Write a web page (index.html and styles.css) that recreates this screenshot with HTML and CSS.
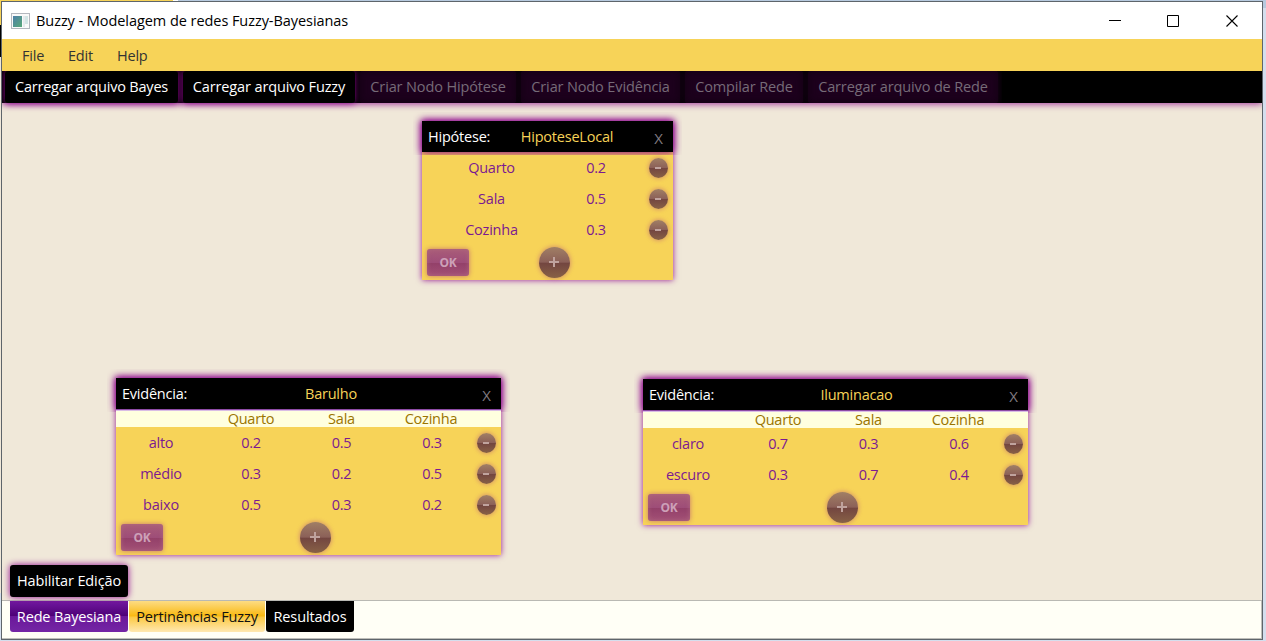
FILE: index.html
```html
<!DOCTYPE html>
<html lang="pt">
<head>
<meta charset="utf-8">
<title>Buzzy</title>
<link rel="stylesheet" href="styles.css">
</head>
<body>
<div class="behind"><i class="behind-top"></i><i class="behind-white"></i><i class="behind-gold"></i><i class="behind-dark"></i><i class="behind-sand"></i></div>
<div class="window">
  <header class="titlebar">
    <svg class="app-icon" width="19" height="16" viewBox="0 0 19 16"><defs><linearGradient id="g" x2="1" y2="1"><stop offset="0" stop-color="#4d80a8"/><stop offset="1" stop-color="#57a878"/></linearGradient></defs><rect x=".5" y=".5" width="18" height="15" fill="#fafafa" stroke="#b4b8bf"/><rect x="2" y="3" width="9" height="11" fill="url(#g)"/><rect x="12" y="3" width="2" height="11" fill="#e6eaed"/><rect x="14" y="3" width="3" height="8" fill="#d3e5e5"/></svg>
    <span class="title">Buzzy - Modelagem de redes Fuzzy-Bayesianas</span>
    <svg class="controls" width="130" height="14" viewBox="0 0 130 14" fill="none" stroke="#000"><path d="M0 6.500h12M58.500 1.500h11v11h-11z"/><path d="M117.500 1.500l11 11m0-11l-11 11" stroke-width="1.100"/></svg>
  </header>
  <nav class="menu"><span class="m1">File</span><span class="m2">Edit</span><span class="m3">Help</span></nav>
  <div class="toolbar">
    <button class="tool t1"><span>Carregar arquivo Bayes</span></button>
    <button class="tool t2"><span>Carregar arquivo Fuzzy</span></button>
    <button class="tool off t3"><span>Criar Nodo Hipótese</span></button>
    <button class="tool off t4"><span>Criar Nodo Evidência</span></button>
    <button class="tool off t5"><span>Compilar Rede</span></button>
    <button class="tool off t6"><span>Carregar arquivo de Rede</span></button>
  </div>
  <main class="canvas">
    <section class="node hyp">
      <div class="head"><span class="kind">Hipótese:</span><span class="name">HipoteseLocal</span><span class="close">X</span></div>
      <div class="row"><span>Quarto</span><span>0.2</span><b class="minus"></b></div>
      <div class="row"><span>Sala</span><span>0.5</span><b class="minus"></b></div>
      <div class="row"><span>Cozinha</span><span>0.3</span><b class="minus"></b></div>
      <div class="foot"><button class="ok">OK</button><b class="plus"></b></div>
    </section>
    <section class="node evid noise">
      <div class="head"><span class="kind">Evidência:</span><span class="name">Barulho</span><span class="close">X</span></div>
      <div class="row labels"><span></span><span>Quarto</span><span>Sala</span><span>Cozinha</span></div>
      <div class="row"><span>alto</span><span>0.2</span><span>0.5</span><span>0.3</span><b class="minus"></b></div>
      <div class="row"><span>médio</span><span>0.3</span><span>0.2</span><span>0.5</span><b class="minus"></b></div>
      <div class="row"><span>baixo</span><span>0.5</span><span>0.3</span><span>0.2</span><b class="minus"></b></div>
      <div class="foot"><button class="ok">OK</button><b class="plus"></b></div>
    </section>
    <section class="node evid light">
      <div class="head"><span class="kind">Evidência:</span><span class="name">Iluminacao</span><span class="close">X</span></div>
      <div class="row labels"><span></span><span>Quarto</span><span>Sala</span><span>Cozinha</span></div>
      <div class="row"><span>claro</span><span>0.7</span><span>0.3</span><span>0.6</span><b class="minus"></b></div>
      <div class="row"><span>escuro</span><span>0.3</span><span>0.7</span><span>0.4</span><b class="minus"></b></div>
      <div class="foot"><button class="ok">OK</button><b class="plus"></b></div>
    </section>
    <button class="edit">Habilitar Edição</button>
  </main>
  <footer class="tabs"><span class="tab purple">Rede Bayesiana</span><span class="tab gold">Pertinências Fuzzy</span><span class="tab black">Resultados</span></footer>
</div>
</body>
</html>
```
FILE: styles.css
```css
* { box-sizing: border-box; }
body {
  margin: 0; padding: 1px 3px 1px 1px; width: 1266px; height: 641px; overflow: hidden;
  background: #d4deed; font: 14.5px/20px "Open Sans", "Noto Sans", sans-serif;
  letter-spacing: -0.22px; white-space: nowrap;
}
button { font: inherit; letter-spacing: inherit; border: 0; padding: 0; }
.behind { position: absolute; left: 0; top: 0; width: 1266px; height: 641px; z-index: -1; }
.behind i { position: absolute; left: 0; }
.behind-top { top: 0; width: 1266px; height: 8px; background: #b7cadf; }
.behind-white { top: 0; width: 178px; height: 2px; background: #fff; }
.behind-gold { top: 0; width: 173px; height: 25px; background: #f7d358; }
.behind-dark { top: 25px; width: 2px; height: 32px; background: #000; }
.behind-sand { top: 57px; width: 1px; height: 536px; background: #f0e8d9; }
.window { width: 1262px; height: 639px; border: 1px solid #5e656b; display: flex; flex-direction: column; background: #fff; }
.titlebar { height: 37px; flex: none; display: flex; align-items: center; padding: 0 23px 0 9px; }
.title { margin-left: 6px; color: #000; letter-spacing: -0.06px; }
.controls { margin-left: auto; }
.menu { height: 32px; flex: none; display: flex; align-items: center; background: #f7d358; color: #333; padding: 2px 0 0 20px; }
.menu span { flex: none; }
.m1 { width: 46px; }
.m2 { width: 49px; }
.toolbar { height: 32px; flex: none; display: flex; gap: 5px; padding-left: 3px; background: #000; box-shadow: 0 1px 7px rgba(139, 0, 139, .8); position: relative; z-index: 1; clip-path: inset(0 0 -10px 0); }
.tool { height: 32px; flex: none; color: #fff; background: #000; border-radius: 3px; box-shadow: 0 0 7px #8b008b; clip-path: inset(0 -5px -9px -5px); letter-spacing: -0.21px; }
.tool.off { color: #766b78; background: #1d001d; box-shadow: 0 0 6px 1px #190019, inset 0 0 8px #120012; clip-path: inset(0 -4px 0 -4px); }
.t1 { width: 173px; } .t2 { width: 172px; } .t3 { width: 156px; } .t4 { width: 159px; } .t5 { width: 118px; } .t6 { width: 190px; }
.tool.t2, .tool.off { letter-spacing: -0.13px; }
.canvas { position: relative; flex: none; height: 497px; background: #f0e8d9; display: flex; align-items: flex-end; padding: 0 0 3px 8px; }
.node { position: absolute; display: flex; flex-direction: column; background: #f7d358; color: #7b1a91; box-shadow: 0 0 6px rgba(139, 0, 139, .9); }
.hyp { left: 420px; top: 18px; width: 251px; height: 159px; }
.noise { left: 114px; top: 275px; width: 385px; height: 177px; }
.light { left: 641px; top: 276px; width: 385px; height: 146px; }
.head { display: grid; align-items: center; height: 31px; flex: none; background: #000; box-shadow: 0 0 8px 1px #8b008b; color: #fff; padding-left: 6px; text-align: center; clip-path: inset(-9px -9px -3px -9px); }
.hyp .head { grid-template-columns: 63px 152px 31px; }
.evid .head { grid-template-columns: 67px 281px 33px; }
.kind { text-align: left; }
.name { color: #f7d358; }
.noise .name { padding-left: 3px; }
.close { color: #807b80; font-size: 15px; padding-top: 3px; }
.row { height: 31px; flex: none; display: grid; align-items: center; text-align: center; }
.hyp .row { grid-template-columns: 139px 70px 55px; }
.evid .row { grid-template-columns: 90px 90px 91px 90px 20px; }
.hyp .minus { margin-left: 18px; }
.evid .row.labels { height: 16px; margin-top: 2px; background: #ffffdf; color: #9a7400; line-height: 16px; box-shadow: 0 -1px #d9bde5, 0 -2px #8d4aa5; position: relative; }
.labels span:last-child { padding-right: 2px; }
.minus, .plus { position: relative; display: block; border-radius: 50%; background: linear-gradient(#a17f65, #8b6058 49%, #734640 52%, #886146); box-shadow: 0 0 5px rgba(139, 0, 139, .4); }
.minus { width: 19px; height: 20px; align-self: start; margin-top: 6px; }
.plus { width: 31px; height: 31px; }
.minus::after, .plus::after, .plus::before { content: ""; position: absolute; background: #c0a39e; }
.minus::after { width: 6px; height: 2px; left: 6px; top: 9px; }
.plus::before { width: 10px; height: 2px; left: 10px; top: 14px; }
.plus::after { width: 2px; height: 10px; left: 14px; top: 10px; }
.foot { flex: 1; display: flex; align-items: center; padding-left: 5px; }
.ok { width: 42px; height: 27px; border-radius: 3px; color: #cda1b8; font-weight: 700; font-size: 12px; background: linear-gradient(#aa5d79, #9e4d78 50%, #934069 52%, #a35076); box-shadow: 0 0 5px rgba(139, 0, 139, .45), inset 0 0 5px rgba(175, 105, 125, .9); }
.hyp .plus { margin-left: 70px; }
.evid .plus { margin-left: 137px; }
.edit { width: 118px; height: 32px; color: #fff; background: #000; border-radius: 3px; box-shadow: 0 0 7px #8b008b; letter-spacing: -0.1px; }
.tabs { flex: 1; display: flex; align-items: flex-start; gap: 1px; padding-left: 8px; background: #fffff6; border-top: 1px solid #b9b9b3; box-shadow: inset -1px -1px #bebeb9; }
.tab { height: 31px; line-height: 31px; text-align: center; border-radius: 0 0 3px 3px; letter-spacing: -0.14px; }
.purple { width: 118px; color: #fff; background: linear-gradient(#7119a0, #4d0076 49%, #6b189a 50%, #7426a5); }
.gold { width: 136px; color: #111; background: linear-gradient(#fddc83, #f9b912 48%, #fbc943 52%, #ffe8b1); }
.black { width: 88px; color: #fff; background: #000; }
```
